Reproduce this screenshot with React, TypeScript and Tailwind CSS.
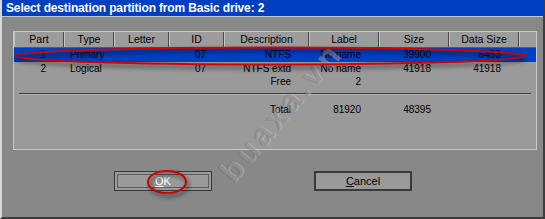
const cols = [
  { name: 'Part', w: 'w-[50px]' },
  { name: 'Type', w: 'w-[50px]' },
  { name: 'Letter', w: 'w-[55px]' },
  { name: 'ID', w: 'w-[55px]' },
  { name: 'Description', w: 'w-[85px]' },
  { name: 'Label', w: 'w-[70px]' },
  { name: 'Size', w: 'w-[70px]' },
  { name: 'Data Size', w: 'w-[70px]' },
]

type Row = string[]

const rows: Row[] = [
  ['1', 'Primary', '', '07', 'NTFS', 'No name', '39900', '6453'],
  ['2', 'Logical', '', '07', 'NTFS extd', 'No name', '41918', '41918'],
  ['', '', '', '', 'Free', '2', '', ''],
]

function Cells({ row }: { row: Row }) {
  return (
    <>
      {row.map((v, i) => (
        <div
          key={i}
          className={`${cols[i].w} shrink-0 whitespace-nowrap ${i === 1 ? 'pl-[6px] text-left' : 'pr-[18px] text-right'}`}
        >
          {v}
        </div>
      ))}
    </>
  )
}

export default function App() {
  return (
    <div className="relative h-[219px] w-[545px] overflow-hidden border-l-2 border-r-2 border-b-2 border-l-[#d8d8d8] border-r-[#3c3c3c] border-b-[#3c3c3c] bg-[#888888] font-['Liberation_Sans',sans-serif] text-[10px] leading-none text-black">
      {/* title bar */}
      <div className="flex h-[17px] items-center border-b border-b-[#c4c4c4] bg-[#0040c0] pl-[4px] text-[12px] font-bold tracking-[-0.15px] text-white">
        Select destination partition from Basic drive: 2
      </div>

      {/* partition list */}
      <div className="ml-[11px] mt-[14px] h-[119px] w-[524px] border border-[#c8c8c8] bg-[#9a9a9a]">
        <div className="flex h-[16px] border-b border-b-[#5a5a5a] bg-[#9c9c9c] text-[10.5px]">
          {cols.map((c) => (
            <div
              key={c.name}
              className={`${c.w} flex shrink-0 items-center justify-center whitespace-nowrap border-l border-r border-l-[#c4c4c4] border-r-[#4a4a4a]`}
            >
              {c.name}
            </div>
          ))}
          <div className="flex-1 border-l border-l-[#c4c4c4]" />
        </div>

        <div className="flex h-[14px] items-center bg-[#0040c0]">
          <Cells row={rows[0]} />
        </div>
        <div className="flex h-[13px] items-center">
          <Cells row={rows[1]} />
        </div>
        <div className="flex h-[13px] items-center">
          <Cells row={rows[2]} />
        </div>

        <div className="mx-[5px] mt-[5px] border-t border-b border-t-[#3a3a3a] border-b-[#b4b4b4]" />

        <div className="mt-[8px] flex h-[13px] items-center">
          <Cells row={['', '', '', '', 'Total', '81920', '48395', '']} />
        </div>
      </div>

      {/* buttons */}
      <div className="mt-[21px] flex gap-[102px] pl-[112px] text-[11px]">
        <button className="flex h-[20px] w-[98px] items-center justify-center border border-[#3a3a3a] bg-[#9a9a9a] p-[2px]">
          <span className="flex h-full w-full items-center justify-center border border-[#5e5e5e] text-white">
            <span className="underline">O</span>K
          </span>
        </button>
        <button className="flex h-[20px] w-[98px] items-center justify-center border-2 border-[#3a3a3a] bg-[#9a9a9a]">
          <span className="underline">C</span>ancel
        </button>
      </div>

      {/* watermark */}
      <div className="pointer-events-none absolute left-[188px] top-[96px] w-[180px] origin-center -rotate-[50deg] text-center text-[32px] font-bold tracking-[4px] text-[#5a5a5a]/30 [text-shadow:1px_1px_0_rgba(210,210,210,0.4)]">
        buaxa.vn
      </div>

      {/* red annotation ellipses */}
      <svg className="pointer-events-none absolute left-0 top-0" width="545" height="219">
        <defs>
          <filter id="sh" x="-10%" y="-50%" width="120%" height="200%">
            <feGaussianBlur stdDeviation="2" />
          </filter>
        </defs>
        <ellipse cx="268" cy="59" rx="255" ry="8.5" fill="none" stroke="#000" strokeOpacity="0.45" strokeWidth="3" filter="url(#sh)" />
        <ellipse cx="268" cy="56" rx="255" ry="8.5" fill="none" stroke="#d40000" strokeWidth="2" />
        <ellipse cx="167" cy="185" rx="19" ry="11" fill="none" stroke="#000" strokeOpacity="0.45" strokeWidth="3" filter="url(#sh)" />
        <ellipse cx="165" cy="182" rx="19" ry="11" fill="none" stroke="#d40000" strokeWidth="2" />
      </svg>
    </div>
  )
}
